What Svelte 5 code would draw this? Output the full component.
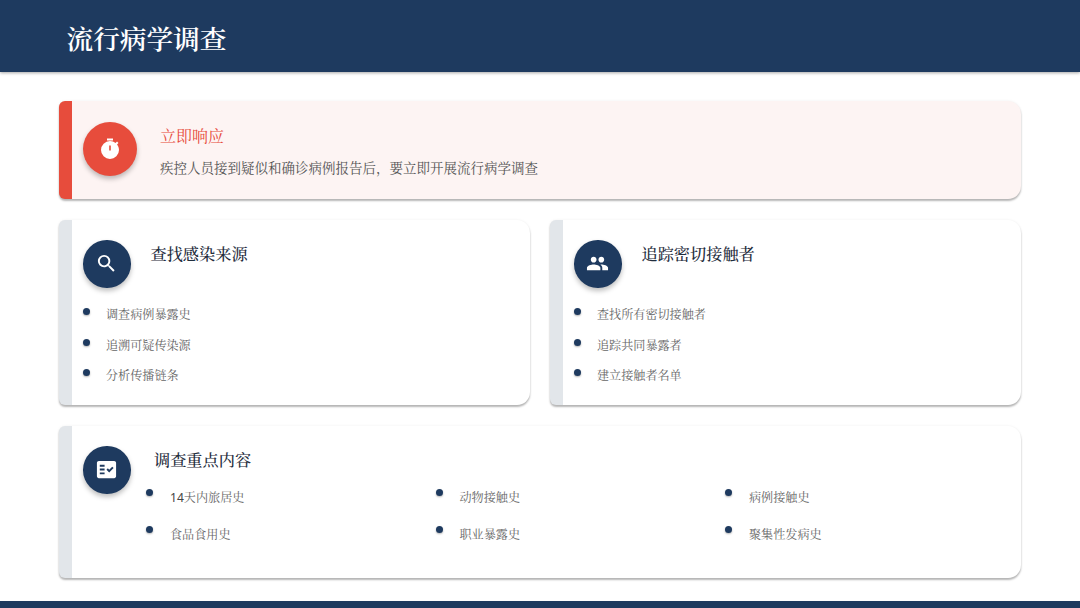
<script lang="ts">
  const sources = ["调查病例暴露史", "追溯可疑传染源", "分析传播链条"];
  const contacts = ["查找所有密切接触者", "追踪共同暴露者", "建立接触者名单"];
  const focus = [
    { num: "14", text: "天内旅居史" },
    { text: "动物接触史" },
    { text: "病例接触史" },
    { text: "食品食用史" },
    { text: "职业暴露史" },
    { text: "聚集性发病史" }
  ];
</script>

<div class="page">
  <header class="top-bar">
    <h1>流行病学调查</h1>
  </header>

  <main class="content">
    <section class="card alert">
      <div class="icon-circle large red">
        <svg viewBox="0 0 24 24" width="24" height="24" fill="#fff">
          <path d="M9 1.5h6v2H9z" />
          <path d="M19.03 7.39l1.42-1.42-1.41-1.41-1.47 1.47A8.96 8.96 0 0 0 12 4a9 9 0 1 0 9 9c0-2.12-.74-4.07-1.97-5.61zM12.8 13.5h-1.6V8.5h1.6v5z" />
        </svg>
      </div>
      <div class="alert-text">
        <h2>立即响应</h2>
        <p>疾控人员接到疑似和确诊病例报告后，要立即开展流行病学调查</p>
      </div>
    </section>

    <div class="two-col">
      <section class="card info">
        <div class="info-head">
          <div class="icon-circle">
            <svg viewBox="0 0 24 24" width="23" height="23" fill="#fff">
              <path d="M15.5 14h-.79l-.28-.27A6.47 6.47 0 0 0 16 9.5 6.5 6.5 0 1 0 9.5 16c1.61 0 3.09-.59 4.23-1.57l.27.28v.79l5 4.99L20.49 19l-4.99-5zm-6 0C7.01 14 5 11.99 5 9.5S7.01 5 9.5 5 14 7.01 14 9.5 11.99 14 9.5 14z" />
            </svg>
          </div>
          <h3>查找感染来源</h3>
        </div>
        <ul class="list">
          {#each sources as item}
            <li><span class="dot"></span><span>{item}</span></li>
          {/each}
        </ul>
      </section>

      <section class="card info">
        <div class="info-head">
          <div class="icon-circle">
            <svg viewBox="0 0 24 24" width="23" height="23" fill="#fff">
              <path d="M16 11c1.66 0 2.99-1.34 2.99-3S17.66 5 16 5s-3 1.34-3 3 1.34 3 3 3zm-8 0c1.66 0 2.99-1.34 2.99-3S9.66 5 8 5 5 6.34 5 8s1.34 3 3 3zm0 2c-2.33 0-7 1.17-7 3.5V19h14v-2.5C15 14.17 10.33 13 8 13zm8 0c-.29 0-.62.02-.97.05 1.16.84 1.97 1.97 1.97 3.45V19h6v-2.5c0-2.33-4.67-3.5-7-3.5z" />
            </svg>
          </div>
          <h3>追踪密切接触者</h3>
        </div>
        <ul class="list">
          {#each contacts as item}
            <li><span class="dot"></span><span>{item}</span></li>
          {/each}
        </ul>
      </section>
    </div>

    <section class="card focus">
      <div class="icon-circle">
        <svg viewBox="0 0 24 24" width="23" height="23" fill="#fff">
          <path fill-rule="evenodd" d="M20 3H4c-1.1 0-2 .9-2 2v14c0 1.1.9 2 2 2h16c1.1 0 2-.9 2-2V5c0-1.1-.9-2-2-2zM10 17H5v-2h5v2zm0-4H5v-2h5v2zm0-4H5V7h5v2zm4.82 6L12 12.16l1.41-1.41 1.41 1.42L17.99 9l1.42 1.42L14.82 15z" />
        </svg>
      </div>
      <div class="focus-body">
        <h3>调查重点内容</h3>
        <ul class="focus-grid">
          {#each focus as item}
            <li>
              <span class="dot"></span>
              <span>{#if item.num}<span class="num">{item.num}</span>{/if}{item.text}</span>
            </li>
          {/each}
        </ul>
      </div>
    </section>
  </main>

  <footer class="bottom-bar"></footer>
</div>

<style>
  :global(body) {
    margin: 0;
    background: #fff;
  }

  .page {
    width: 1080px;
    height: 608px;
    display: flex;
    flex-direction: column;
    overflow: hidden;
    font-family: "Noto Serif CJK SC", "Liberation Serif", "Noto Sans CJK SC", serif;
  }

  .top-bar {
    box-sizing: border-box;
    height: 72px;
    flex: none;
    display: flex;
    align-items: center;
    padding: 3px 0 0 66.5px;
    background: #1e3a5f;
    box-shadow: 0 1px 3px rgba(0, 0, 0, 0.35);
  }

  h1 {
    margin: 0;
    font-size: 26.67px;
    font-weight: 600;
    line-height: 40px;
    color: #fff;
  }

  .content {
    flex: 1;
    display: flex;
    flex-direction: column;
    gap: 21px;
    padding: 29px 59px 0;
  }

  .bottom-bar {
    height: 7px;
    flex: none;
    background: #1e3a5f;
  }

  .card {
    box-sizing: border-box;
    background: #fff;
    border-left: 13px solid #e2e6ea;
    border-radius: 6px 13px 13px 6px;
    box-shadow: 0 2px 2px rgba(0, 0, 0, 0.28), 0 0 3px rgba(0, 0, 0, 0.06);
  }

  .alert {
    height: 98px;
    display: flex;
    align-items: center;
    gap: 23px;
    padding: 0 0 2px 11px;
    background: #fdf4f3;
    border-left-color: #e74c3c;
  }

  .alert-text {
    padding-top: 4px;
  }

  .alert-text h2 {
    margin: 0 0 10px;
    font-size: 16px;
    font-weight: 400;
    line-height: 22px;
    color: #e74c3c;
  }

  .alert-text p {
    margin: 0;
    font-size: 13.5px;
    line-height: 20px;
    color: #555;
  }

  .icon-circle {
    width: 47.5px;
    height: 47.5px;
    flex: none;
    display: flex;
    align-items: center;
    justify-content: center;
    border-radius: 50%;
    background: #1e3a5f;
    box-shadow: 0 3px 5px rgba(0, 0, 0, 0.25);
  }

  .icon-circle.large {
    width: 54px;
    height: 54px;
  }

  .icon-circle.red {
    background: #e74c3c;
  }

  .two-col {
    display: grid;
    grid-template-columns: 1fr 1fr;
    gap: 20px;
  }

  .info {
    height: 185px;
    padding: 20px 11px 0;
  }

  .info-head {
    display: flex;
    align-items: flex-start;
    gap: 20px;
    margin-bottom: 11px;
  }

  h3 {
    margin: -1px 0 1px;
    font-size: 16.2px;
    font-weight: 500;
    line-height: 28px;
    color: #1f2d3d;
  }

  .list,
  .focus-grid {
    margin: 0;
    padding: 0;
    list-style: none;
    font-size: 12.1px;
    color: #666;
  }

  .list li {
    height: 30.5px;
    display: flex;
    align-items: center;
    gap: 17px;
  }

  .dot {
    width: 7px;
    height: 7px;
    flex: none;
    margin-right: -1px;
    border-radius: 50%;
    background: #1e3a5f;
    box-shadow: 0 1px 2px rgba(0, 0, 0, 0.3);
    transform: translateY(-2px);
  }

  .focus {
    height: 152px;
    display: flex;
    align-items: flex-start;
    gap: 15.5px;
    padding: 20px 11px 0;
  }

  .focus-body {
    flex: 1;
  }

  .focus-body h3 {
    margin: -1px 0 5px 8px;
  }

  .focus-grid {
    display: grid;
    grid-template-columns: repeat(3, 289.5px);
    grid-auto-rows: 37px;
  }

  .focus-grid li {
    display: flex;
    align-items: center;
    gap: 18px;
  }

  .focus-grid .dot {
    transform: translateY(-4px);
  }

  .num {
    font-family: "Noto Sans", "Noto Sans CJK SC", sans-serif;
    color: #444;
  }
</style>
